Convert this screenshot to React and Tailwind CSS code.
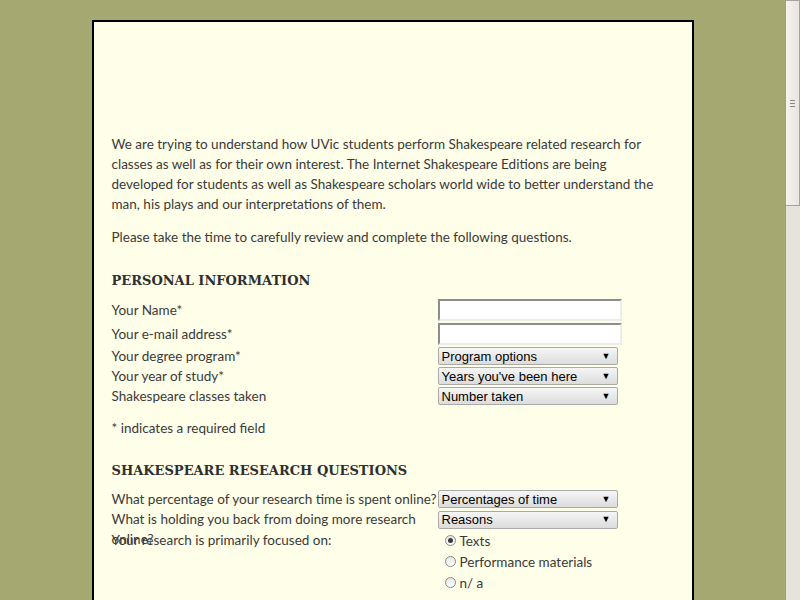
import React from 'react';

const body = { fontFamily: 'Lato, "DejaVu Sans", sans-serif' };
const serif = { fontFamily: '"DejaVu Serif", "Liberation Serif", serif' };
const ctrl = { fontFamily: '"Liberation Sans", Arial, sans-serif' };

const TextBox = () => (
  <div className="w-[184px] h-[22px] bg-white border-2 border-t-[#8d8d8d] border-l-[#8d8d8d] border-b-[#ececec] border-r-[#ececec]" />
);

const Select = ({ label }) => (
  <div
    className="w-[180px] h-[18px] flex items-center justify-between px-[3px] rounded-[2px] border border-[#a9a9a9] bg-gradient-to-b from-[#f6f6f6] to-[#dcdcdc] text-[13px] text-black leading-none"
    style={ctrl}
  >
    <span>{label}</span>
    <span className="text-[9px] pr-[3px]">▼</span>
  </div>
);

const Radio = ({ label, checked }) => (
  <div className="h-[21px] flex items-center gap-[4px] pl-[7px]">
    <span className="w-[11px] h-[11px] rounded-full border border-[#8a8a8a] bg-gradient-to-b from-[#e6e6e6] to-white flex items-center justify-center">
      {checked && <span className="w-[5px] h-[5px] rounded-full bg-[#3a3a3a]" />}
    </span>
    <span>{label}</span>
  </div>
);

export default function App() {
  return (
    <div className="flex h-[600px] w-[800px] overflow-hidden bg-[#a5a870]">
      <div className="flex-1 flex justify-center pt-[20px]">
        <div
          className="w-[602px] h-[620px] bg-[#fffee8] border-2 border-black border-b-0 pl-[18px] pr-[19px] pt-[112px] text-[13.5px] leading-[20px] text-[#3a3a3a]"
          style={body}
        >
          <p className="w-[545px]">
            We are trying to understand how UVic students perform Shakespeare related research for
            classes as well as for their own interest. The Internet Shakespeare Editions are being
            developed for students as well as Shakespeare scholars world wide to better understand the
            man, his plays and our interpretations of them.
          </p>
          <p className="mt-[13px]">Please take the time to carefully review and complete the following questions.</p>

          <h2 className="mt-[24px] h-[20px] text-[13px] font-bold text-[#2f2f2f]" style={serif}>
            PERSONAL INFORMATION
          </h2>
          <div className="mt-[7px]">
            <div className="flex h-[24px] items-center">
              <div className="w-[326px] shrink-0">Your Name*</div>
              <TextBox />
            </div>
            <div className="flex h-[24px] items-center">
              <div className="w-[326px] shrink-0">Your e-mail address*</div>
              <TextBox />
            </div>
            <div className="flex h-[20px] items-center">
              <div className="w-[326px] shrink-0">Your degree program*</div>
              <Select label="Program options" />
            </div>
            <div className="flex h-[20px] items-center">
              <div className="w-[326px] shrink-0">Your year of study*</div>
              <Select label="Years you've been here" />
            </div>
            <div className="flex h-[20px] items-center">
              <div className="w-[326px] shrink-0">Shakespeare classes taken</div>
              <Select label="Number taken" />
            </div>
          </div>
          <p className="mt-[12px]">* indicates a required field</p>

          <h2 className="mt-[23px] h-[20px] text-[13px] font-bold text-[#2f2f2f]" style={serif}>
            SHAKESPEARE RESEARCH QUESTIONS
          </h2>
          <div className="mt-[8px]">
            <div className="flex h-[20px]">
              <div className="w-[326px] shrink-0 h-[20px] whitespace-nowrap">
                What percentage of your research time is spent online?
              </div>
              <div className="flex items-center">
                <Select label="Percentages of time" />
              </div>
            </div>
            <div className="flex h-[21px]">
              <div className="w-[326px] shrink-0 h-[21px]">
                What is holding you back from doing more research online?
              </div>
              <div className="flex items-center">
                <Select label="Reasons" />
              </div>
            </div>
            <div className="flex">
              <div className="w-[326px] shrink-0">Your research is primarily focused on:</div>
              <div>
                <Radio label="Texts" checked />
                <Radio label="Performance materials" />
                <Radio label="n/ a" />
              </div>
            </div>
          </div>
        </div>
      </div>
      <div className="w-[15px] flex flex-col border-l border-[#a09a92] bg-[#e6e2dc]">
        <div className="h-[206px] flex items-center justify-center border border-l-0 border-[#a8a29a] bg-gradient-to-r from-[#f6f4f0] to-[#e8e4e0]">
          <div className="flex flex-col gap-[2px]">
            <span className="block w-[5px] h-px bg-[#8a8680]" />
            <span className="block w-[5px] h-px bg-[#8a8680]" />
            <span className="block w-[5px] h-px bg-[#8a8680]" />
          </div>
        </div>
      </div>
    </div>
  );
}
